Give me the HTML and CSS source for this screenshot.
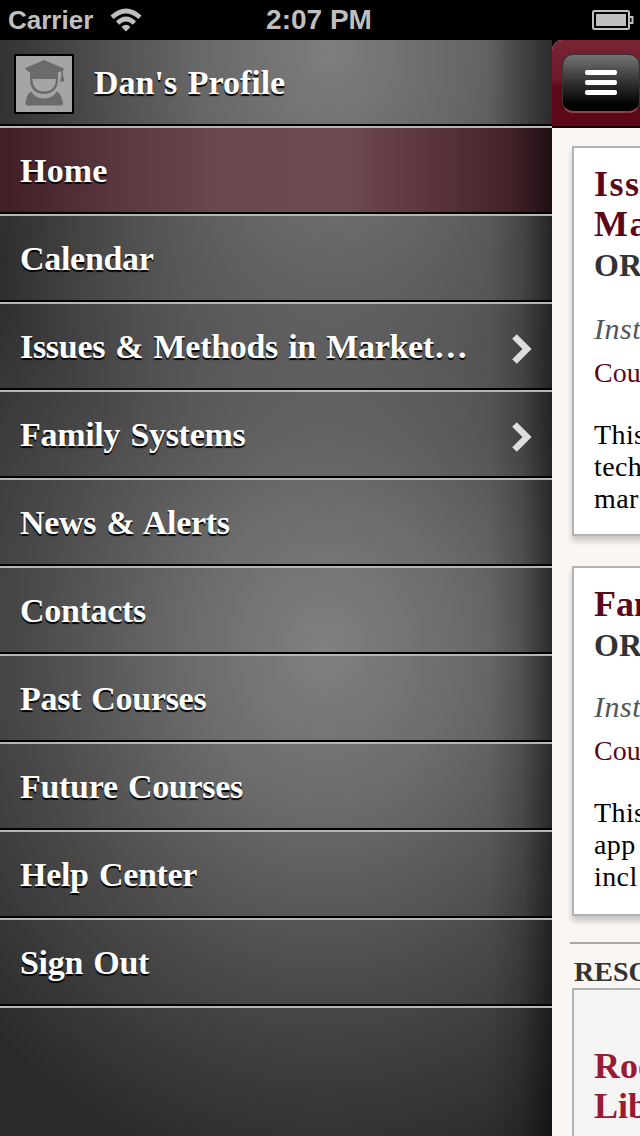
FILE: index.html
```html
<!DOCTYPE html>
<html lang="en">
<head>
    <meta charset="UTF-8">
    <title>Home</title>
    <link rel="stylesheet" href="styles.css">
</head>
<body>
    <header class="statusbar">
        <div class="carrier">
            <span>Carrier</span>
            <svg width="32" height="24" viewBox="0 0 32 24" fill="none" stroke="#bfbfbf" stroke-width="4.600">
                <path d="M2 9.300 Q16 -3.300 30 9.300"/>
                <path d="M7.500 15 Q16 7 24.500 15"/>
                <path d="M11.500 19 Q16 14.500 20.500 19 L16 23.500Z" fill="#bfbfbf" stroke="none"/>
            </svg>
        </div>
        <div class="clock">2:07 PM</div>
        <svg class="battery" width="42" height="20" viewBox="0 0 42 20" fill="none" stroke="#bfbfbf" stroke-width="2">
            <rect x="1" y="1" width="36" height="18" rx="1.5"/>
            <rect x="4" y="4" width="30" height="12" fill="#bfbfbf" stroke="none"/>
            <path d="M38 7h2.5v6H38"/>
        </svg>
    </header>
    <div class="screen">
        <nav class="menu">
            <a class="item profile">
                <svg class="avatar" width="60" height="60" viewBox="0 0 60 60">
                    <rect x="1" y="1" width="58" height="58" fill="#a5a5a5" stroke="#000" stroke-width="2"/>
                    <path fill="#6b6b6b" d="M30 6 L50 14.500 L49 16.500 V21 L50.500 27.500 H46 L47.500 21 V17 L44 18.500 V26 C44 35 38 40 30 40 C22 40 16 35 16 26 V18.500 L10.500 14.500Z"/>
                    <path fill="#a5a5a5" d="M18.500 25 H42 C42 33 37 37.500 30 37.500 C23 37.500 18.500 33 18.500 25Z"/>
                    <path fill="#6b6b6b" d="M17 37.500 Q22 44.500 30 44.500 Q38 44.500 43 37.500 Q48 41 49 49.500 Q49 51.500 47 51.500 H13.500 Q11.500 51.500 11.500 49.500 Q12 41 17 37.500Z"/>
                </svg>
                <span>Dan's Profile</span>
            </a>
            <a class="item active"><span>Home</span></a>
            <a class="item"><span>Calendar</span></a>
            <a class="item"><span>Issues &amp; Methods in Market…</span>
                <svg class="arrow" width="20" height="30" viewBox="0 0 20 30" fill="none" stroke="#dedede" stroke-width="6.500"><path d="M2.500 2.500 L15 15 L2.500 27.500"/></svg>
            </a>
            <a class="item"><span>Family Systems</span>
                <svg class="arrow" width="20" height="30" viewBox="0 0 20 30" fill="none" stroke="#dedede" stroke-width="6.500"><path d="M2.500 2.500 L15 15 L2.500 27.500"/></svg>
            </a>
            <a class="item"><span>News &amp; Alerts</span></a>
            <a class="item"><span>Contacts</span></a>
            <a class="item"><span>Past Courses</span></a>
            <a class="item"><span>Future Courses</span></a>
            <a class="item"><span>Help Center</span></a>
            <a class="item"><span>Sign Out</span></a>
        </nav>
        <main class="page">
            <div class="toolbar">
                <button class="menu-btn"><i></i><i></i><i></i></button>
            </div>
            <section class="card">
                <h2 class="wide">Issues<br>Market</h2>
                <h3>OR</h3>
                <p class="teacher">Instructor</p>
                <p class="link">Course</p>
                <p class="desc">This<br>tech<br>mar</p>
            </section>
            <section class="card second">
                <h2>Family</h2>
                <h3>OR</h3>
                <p class="teacher">Instructor</p>
                <p class="link">Course</p>
                <p class="desc">This<br>app<br>incl</p>
            </section>
            <h4>RESOURCES</h4>
            <section class="card resources">
                <h2>Roo<br>Lib</h2>
            </section>
        </main>
    </div>
</body>
</html>
```
FILE: styles.css
```css
body {
    margin: 0;
    width: 640px;
    height: 1136px;
    overflow: hidden;
    background: #000;
    font-family: Palatino, 'Palatino Linotype', 'Book Antiqua', 'Liberation Serif', serif;
}
.statusbar {
    height: 40px;
    display: grid;
    grid-template-columns: 1fr auto 1fr;
    align-items: center;
    padding: 0 6px 0 8px;
    box-sizing: border-box;
    color: #bfbfbf;
    font: bold 26px/40px 'Liberation Sans', Arial, sans-serif;
}
.carrier {
    display: flex;
    align-items: center;
    gap: 17px;
}
.clock {
    margin-right: 4px;
    font-size: 28px;
}
.battery {
    justify-self: end;
}
.screen {
    display: flex;
    height: 1096px;
    overflow: hidden;
}

/* side menu */
.menu {
    flex: 0 0 552px;
    background:
        linear-gradient(90deg, transparent 490px, rgba(0,0,0,0.15) 522px, rgba(0,0,0,0.5) 552px),
        radial-gradient(ellipse 370px 330px at 335px 110px, rgba(126,126,126,0.9) 0%, rgba(110,110,110,0.65) 45%, rgba(80,80,80,0) 100%),
        radial-gradient(ellipse 470px 540px at 325px 610px, #808080 0%, #6c6c6c 28%, #484848 65%, #2a2a2a 100%);
}
.item {
    display: flex;
    align-items: center;
    height: 88px;
    box-sizing: border-box;
    padding: 0 20px;
    border-bottom: 2px solid #b4b6b4;
    box-shadow: inset 0 -2px #000;
    color: #fff;
    font-size: 34px;
    font-weight: bold;
    line-height: 40px;
    letter-spacing: -0.3px;
    word-spacing: 2px;
    white-space: nowrap;
    text-shadow: 0 2px 1px #000;
}
.profile {
    padding-left: 14px;
    gap: 20px;
    letter-spacing: 0;
    background:
        linear-gradient(90deg, transparent 490px, rgba(0,0,0,0.45) 552px),
        radial-gradient(ellipse 350px 420px at 330px 10px, #7e7e7e 0%, #666 40%, #2e2e2e 100%);
}
.avatar {
    margin-top: 2px;
}
.active {
    letter-spacing: 0.2px;
    background: linear-gradient(90deg, #411d24 0, #54323a 90px, #6a484e 220px, #6d4b51 340px, #5d383e 420px, #43222a 510px, #1d1012 552px);
}
.arrow {
    margin: 4px 0 0 auto;
}

/* page content, pushed to the right */
.page {
    flex: 1;
    min-width: 0;
    border-top-left-radius: 10px;
    background: #f9f6f3;
}
.toolbar {
    width: 640px;
    height: 88px;
    box-sizing: border-box;
    padding: 14px 10px;
    border-bottom: 2px solid #1d0004;
    border-top-left-radius: 10px;
    background: linear-gradient(#7a2434, #6d1a2b 45%, #5c0819 55%, #5c0819);
}
.menu-btn {
    display: flex;
    flex-direction: column;
    align-items: center;
    justify-content: center;
    gap: 5px;
    width: 78px;
    height: 59px;
    padding: 0 0 2px;
    border: 1px solid #333;
    border-bottom: 2px solid #8c4450;
    border-radius: 11px;
    background: linear-gradient(#757575, #303030 50%, #000 90%);
}
.menu-btn i {
    width: 32px;
    height: 5px;
    border-radius: 2px;
    background: #fff;
}
.card {
    width: 600px;
    margin: 18px 20px 0;
    height: 390px;
    box-sizing: border-box;
    padding: 16px 20px;
    border: 2px solid #b3b3b3;
    background: #fff;
    box-shadow: 0 5px 6px rgba(0,0,0,0.2);
}
.second {
    margin-top: 30px;
    height: 350px;
}
h2, h3, h4, p {
    margin: 0;
}
h2 {
    color: #5c0819;
    font-size: 36px;
    line-height: 40px;
}
.wide {
    letter-spacing: 1.5px;
}
h3 {
    color: #333;
    font-size: 32px;
    line-height: 43px;
}
.teacher {
    margin-top: 20px;
    color: #555;
    font-size: 30px;
    font-style: italic;
    line-height: 44px;
    letter-spacing: 0.5px;
}
.second .teacher {
    margin-top: 18px;
}
.link {
    color: #5c0819;
    font-size: 28px;
    line-height: 44px;
}
.desc {
    margin-top: 24px;
    font-size: 28px;
    line-height: 32px;
    letter-spacing: 0.4px;
}
h4 {
    margin: 26px 0 0 18px;
    padding: 12px 0 0 4px;
    border-top: 2px solid #aaa;
    color: #333;
    font-size: 28px;
    line-height: 32px;
}
.resources {
    margin-top: 0;
    padding-top: 56px;
    background: #f4f4f4;
    box-shadow: none;
}
.resources h2 {
    color: #9a1a33;
}
```
